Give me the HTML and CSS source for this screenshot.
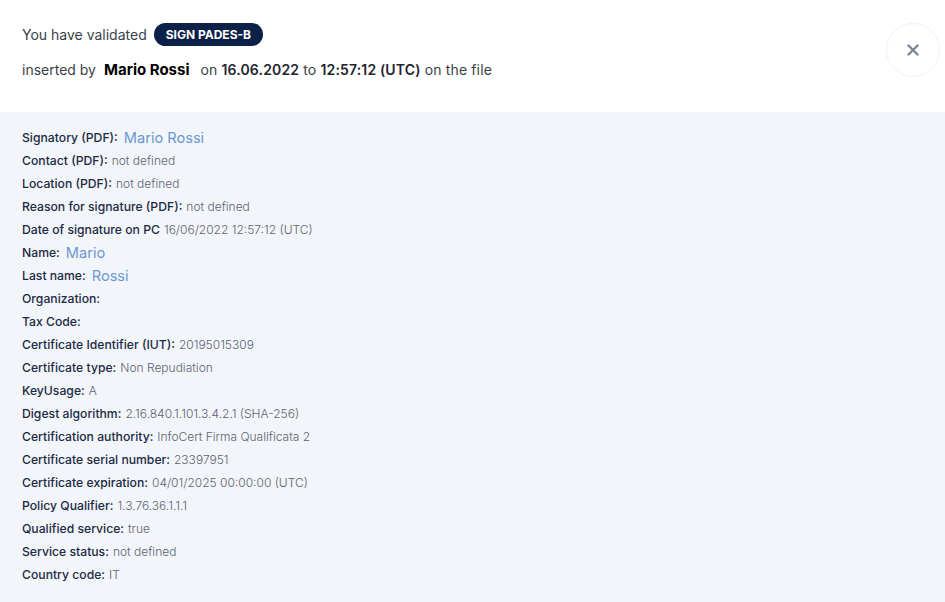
FILE: index.html
```html
<!DOCTYPE html>
<html>
<head>
<meta charset="utf-8">
<link rel="stylesheet" href="styles.css">
</head>
<body>
<div class="page">
  <header class="top">
    <div class="summary">
      <div class="line1">
        <span>You have validated</span>
        <span class="badge">SIGN PADES-B</span>
      </div>
      <div class="line2">
        <span>inserted by</span>
        <span class="who">Mario Rossi</span>
        <span>on <b>16.06.2022</b> to <b>12:57:12 (UTC)</b> on the file</span>
      </div>
    </div>
    <button class="close" aria-label="Close">
      <svg width="12" height="12" viewBox="0 0 12 12"><path d="M1.5 1.5 L10.5 10.5 M10.5 1.5 L1.5 10.5" stroke="#7b8597" stroke-width="2.4" stroke-linecap="round"/></svg>
    </button>
  </header>
  <section class="details">
    <div class="row"><span class="k">Signatory (PDF):</span><span class="v big">Mario Rossi</span></div>
    <div class="row"><span class="k">Contact (PDF):</span><span class="v">not defined</span></div>
    <div class="row"><span class="k">Location (PDF):</span><span class="v">not defined</span></div>
    <div class="row"><span class="k">Reason for signature (PDF):</span><span class="v">not defined</span></div>
    <div class="row"><span class="k">Date of signature on PC</span><span class="v">16/06/2022 12:57:12 (UTC)</span></div>
    <div class="row"><span class="k">Name:</span><span class="v big">Mario</span></div>
    <div class="row"><span class="k">Last name:</span><span class="v big">Rossi</span></div>
    <div class="row"><span class="k">Organization:</span></div>
    <div class="row"><span class="k">Tax Code:</span></div>
    <div class="row"><span class="k">Certificate Identifier (IUT):</span><span class="v">20195015309</span></div>
    <div class="row"><span class="k">Certificate type:</span><span class="v">Non Repudiation</span></div>
    <div class="row"><span class="k">KeyUsage:</span><span class="v">A</span></div>
    <div class="row"><span class="k">Digest algorithm:</span><span class="v">2.16.840.1.101.3.4.2.1 (SHA-256)</span></div>
    <div class="row"><span class="k">Certification authority:</span><span class="v">InfoCert Firma Qualificata 2</span></div>
    <div class="row"><span class="k">Certificate serial number:</span><span class="v">23397951</span></div>
    <div class="row"><span class="k">Certificate expiration:</span><span class="v">04/01/2025 00:00:00 (UTC)</span></div>
    <div class="row"><span class="k">Policy Qualifier:</span><span class="v">1.3.76.36.1.1.1</span></div>
    <div class="row"><span class="k">Qualified service:</span><span class="v">true</span></div>
    <div class="row"><span class="k">Service status:</span><span class="v">not defined</span></div>
    <div class="row"><span class="k">Country code:</span><span class="v">IT</span></div>
  </section>
</div>
</body>
</html>
```
FILE: styles.css
```css
* { box-sizing: border-box; }
html, body { margin: 0; padding: 0; background: #f2f5f9; }
body { font-family: Inter, "Noto Sans", sans-serif; }
.page { width: 945px; min-height: 602px; display: flex; flex-direction: column; }
.top {
  background: #ffffff;
  height: 112px;
  display: flex;
  justify-content: space-between;
  align-items: flex-start;
  padding: 23px 5px 0 22px;
}
.summary { display: flex; flex-direction: column; gap: 12px; color: #3a3f4a; font-size: 14px; }
.line1 { display: flex; align-items: center; gap: 7px; height: 23px; }
.badge {
  background: #0c2148;
  color: #fff;
  font-weight: 700;
  font-size: 12px;
  border-radius: 12px;
  height: 23px;
  padding: 0 12px;
  display: inline-flex;
  align-items: center;
}
.line2 { display: flex; align-items: center; gap: 8px; height: 23px; }
.line2 > span:last-child { letter-spacing: 0.15px; }
.line2 b { font-weight: 600; color: #1f2430; }
.who { font-weight: 700; color: #000; font-size: 15px; margin-right: 3px; }
.close {
  margin-top: 0;
  width: 54px; height: 54px;
  border-radius: 50%;
  border: 1px solid #eef2f6;
  background: #fff;
  display: flex; align-items: center; justify-content: center;
  padding: 0;
}
.details { padding: 14px 22px 0; display: flex; flex-direction: column; }
.row { height: 23px; display: flex; align-items: center; gap: 4px; }
.k { font-size: 12.2px; font-weight: 500; color: #1c2a44; }
.v { font-size: 12px; font-weight: 300; color: #5c6473; }
.v.big { font-size: 14.6px; font-weight: 400; color: #6b98d2; margin-left: 2px; }
```
